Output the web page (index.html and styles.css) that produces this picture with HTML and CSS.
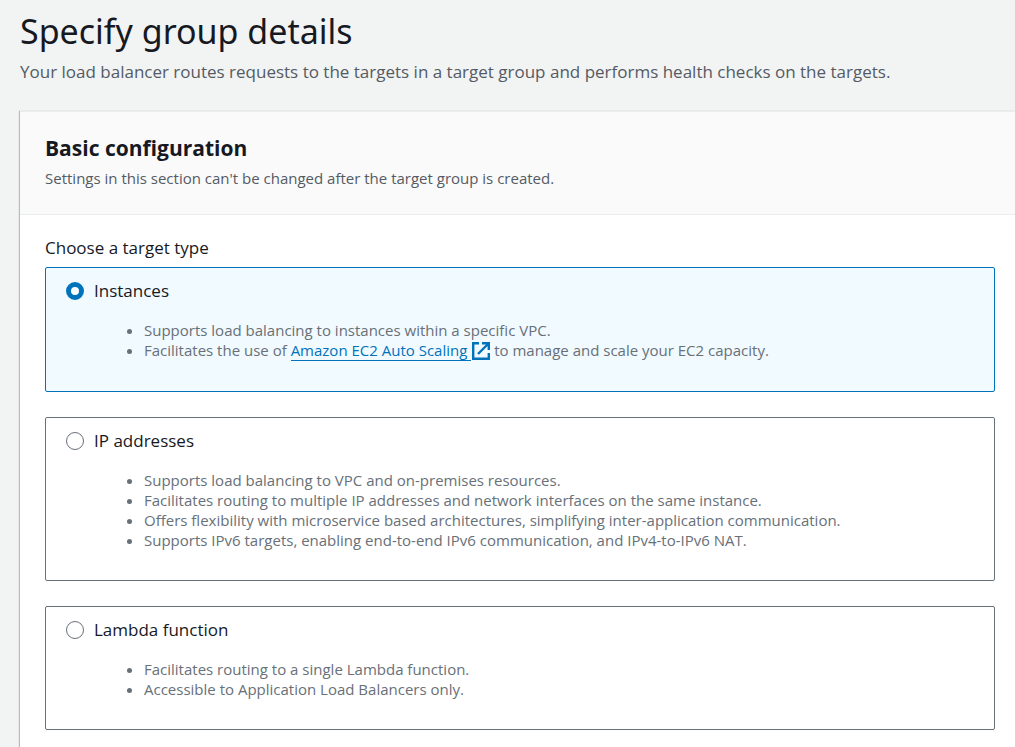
FILE: index.html
```html
<!DOCTYPE html>
<html lang="en">
<head>
<meta charset="utf-8">
<title>Specify group details</title>
<link rel="stylesheet" href="styles.css">
</head>
<body>
<main class="page">
  <header class="page-header">
    <h1>Specify group details</h1>
    <p>Your load balancer routes requests to the targets in a target group and performs health checks on the targets.</p>
  </header>
  <section class="panel">
    <div class="panel-header">
      <h2>Basic configuration</h2>
      <p>Settings in this section can't be changed after the target group is created.</p>
    </div>
    <fieldset class="panel-body">
      <legend>Choose a target type</legend>
      <div class="tiles">
        <div class="tile tile-selected">
          <div class="tile-title"><input type="radio" name="target" id="t1" checked><label for="t1">Instances</label></div>
          <ul>
            <li>Supports load balancing to instances within a specific VPC.</li>
            <li>Facilitates the use of <a href="#autoscaling"><span class="link-text">Amazon EC2 Auto Scaling </span><svg class="external" viewBox="0 0 18 18" aria-hidden="true"><path d="M7 1.2H1.2v15.6h15.6V11M10 1.2h6.8V8M16.5 1.5 6 12"/></svg></a> to manage and scale your EC2 capacity.</li>
          </ul>
        </div>
        <div class="tile">
          <div class="tile-title"><input type="radio" name="target" id="t2"><label for="t2">IP addresses</label></div>
          <ul>
            <li>Supports load balancing to VPC and on-premises resources.</li>
            <li>Facilitates routing to multiple IP addresses and network interfaces on the same instance.</li>
            <li>Offers flexibility with microservice based architectures, simplifying inter-application communication.</li>
            <li>Supports IPv6 targets, enabling end-to-end IPv6 communication, and IPv4-to-IPv6 NAT.</li>
          </ul>
        </div>
        <div class="tile">
          <div class="tile-title"><input type="radio" name="target" id="t3"><label for="t3">Lambda function</label></div>
          <ul>
            <li>Facilitates routing to a single Lambda function.</li>
            <li>Accessible to Application Load Balancers only.</li>
          </ul>
        </div>
      </div>
    </fieldset>
  </section>
</main>
</body>
</html>
```
FILE: styles.css
```css
* { box-sizing: border-box; }
body { margin: 0; background: #f2f3f3; color: #16191f; font-family: "Open Sans", "Noto Sans", sans-serif; }
h1, h2, p, ul { margin: 0; }
.page { display: flex; flex-direction: column; min-height: 100vh; padding: 8px 0 0 20px; }
.page-header { padding-bottom: 25px; }
h1 { font-family: "Noto Sans", sans-serif; font-size: 34px; line-height: 46px; font-weight: 400; }
.page-header p { font-size: 17px; line-height: 28px; padding-top: 4px; color: #545b64; }
.panel { flex: 1; background: #fff; border-top: 1px solid #eaeded; box-shadow: -1px 0 1px #b8bcbc; }
.panel-header { padding: 20px 25px 22px; background: #fafafa; border-bottom: 1px solid #eaeded; }
h2 { font-size: 21px; line-height: 32px; font-weight: 700; }
.panel-header p { font-size: 15px; line-height: 28px; color: #545b64; }
.panel-body { margin: 0; border: 0; min-width: 0; padding: 19px 20px 16px 25px; }
legend { float: left; width: 100%; padding: 0; font-size: 17px; line-height: 28px; margin-bottom: 5px; }
.tiles { clear: both; display: flex; flex-direction: column; gap: 25px; }
.tile { border: 1px solid #687078; border-radius: 2px; padding: 9px 20px 30px; }
.tile-selected { background: #f1faff; border-color: #0073bb; }
.tile-title { display: flex; align-items: center; gap: 10px; font-size: 17px; line-height: 28px; }
input { appearance: none; width: 18px; height: 18px; margin: 0; border: 1px solid #687078; border-radius: 50%; background: #fff; }
input:checked { border: 5px solid #0073bb; }
ul { padding: 15px 0 0 78px; font-size: 15px; line-height: 20px; color: #687078; }
.tile-selected ul { padding-bottom: 1px; }
a { color: #0073bb; text-decoration: none; }
.link-text { border-bottom: 1px solid #0073bb; white-space: pre-wrap; }
.external { width: 18px; height: 18px; vertical-align: -4px; margin-left: 1px; fill: none; stroke: #0073bb; stroke-width: 2.4; }
```
